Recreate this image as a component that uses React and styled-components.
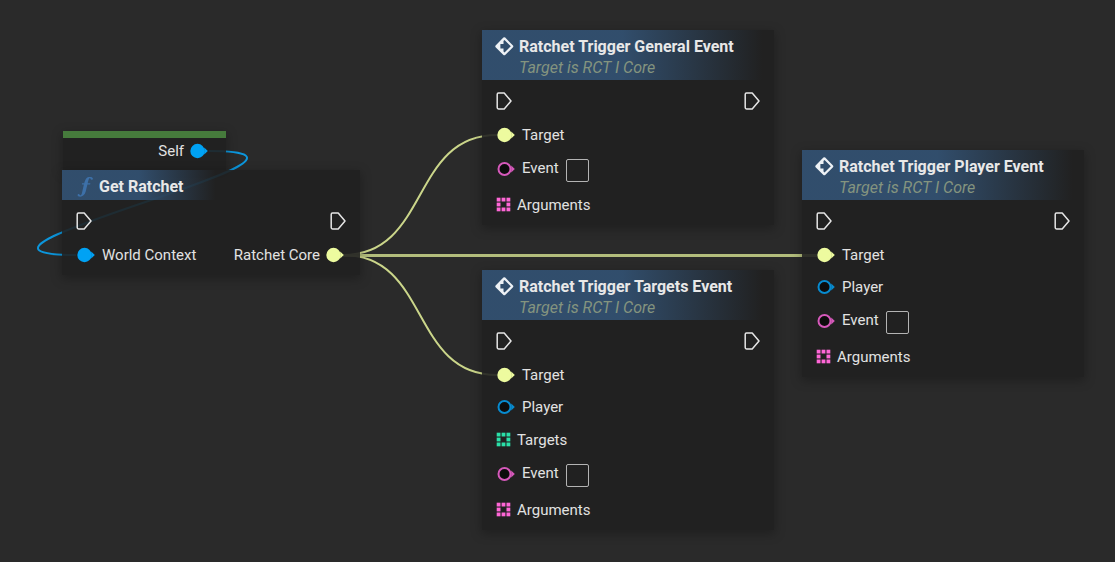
import React from "react";
import styled, { createGlobalStyle } from "styled-components";

const GlobalStyle = createGlobalStyle`
  * { box-sizing: border-box; }
  html, body, #root { height: 100%; }
  body {
    margin: 0;
    background: #2a2a2a;
    color: #e2e2e2;
    font-family: Roboto, "Liberation Sans", sans-serif;
    font-size: 15px;
    line-height: 20px;
  }
`;

const colors = {
  object: "#00a2f4",
  objectOpen: "#078bd0",
  core: "#edfb9f",
  name: "#d659bb",
  args: "#ff66d6",
  targets: "#2ae0a8",
};

const Graph = styled.main`
  position: relative;
  min-height: 100%;
  overflow: hidden;
`;

const Wires = styled.svg`
  position: absolute;
  inset: 0;
  width: 100%;
  height: 100%;
  fill: none;
  stroke-width: 2;
`;

const Node = styled.section`
  position: absolute;
  left: ${(p) => p.$x}px;
  top: ${(p) => p.$y}px;
  width: ${(p) => p.$w}px;
  background: rgba(32, 32, 32, 0.9);
  box-shadow: 0 3px 10px 1px rgba(0, 0, 0, 0.25);
`;

const Header = styled.header`
  display: flex;
  align-items: flex-start;
  gap: 5px;
  height: 50px;
  padding: 7px 14px 0 13px;
  background: linear-gradient(90deg, rgba(50, 80, 112, 0.95) 0%, rgba(50, 80, 112, 0.95) 48%, rgba(50, 80, 112, 0) 96%);
`;

const CompactHeader = styled(Header)`
  gap: 4px;
  height: 30px;
  width: 160px;
  padding: 7px 0 0 15px;
`;

const Title = styled.h2`
  margin: 0;
  font-size: 16px;
  line-height: 20px;
  font-weight: 700;
  color: #e8e8e8;
  white-space: nowrap;
`;

const Subtitle = styled.p`
  margin: 0;
  font-size: 16px;
  line-height: 22px;
  font-style: italic;
  color: #84947f;
  white-space: nowrap;
`;

const Body = styled.div`
  padding: 4px 14px;
`;

const Row = styled.div`
  display: flex;
  align-items: center;
  justify-content: ${(p) => (p.$end ? "flex-end" : "space-between")};
  height: ${(p) => p.$h}px;
`;

const EventRow = styled(Row)`
  justify-content: flex-start;
  gap: 7px;
  margin-bottom: 1px;
`;

const PinLabel = styled.span`
  display: inline-flex;
  align-items: center;
  gap: 5px;
  white-space: nowrap;
`;

const EventLabel = styled.label`
  padding-bottom: 2px;
`;

const ValueBox = styled.input`
  width: 23px;
  height: 23px;
  margin: 2px 0 0;
  padding: 0 2px;
  border: 1px solid #b4b4b4;
  border-radius: 2px;
  background: transparent;
  color: inherit;
  font: inherit;
`;

const GreenBar = styled.div`
  height: 7px;
  background: #467b3c;
`;

const SelfBody = styled.div`
  height: 32px;
  padding: 0 16px 0 14px;
`;

const Exec = () => (
  <svg width="16" height="18" viewBox="0 0 16 18" fill="none" aria-hidden="true">
    <path d="M2.5 1H8.2L15 9L8.2 17H2.5Q1.2 17 1.2 15.6V2.4Q1.2 1 2.5 1Z" stroke="#e6e6e6" strokeWidth="1.5" strokeLinejoin="round" />
  </svg>
);

const Pin = ({ color, open }) => (
  <svg width="21" height="16" viewBox="0 0 21 16" aria-hidden="true">
    <path d="M15.2 4.6L18.8 8L15.2 11.4Z" fill={color} />
    {open ? (
      <circle cx="8.5" cy="8" r="6" fill="#0c0c0c" stroke={color} strokeWidth="2" />
    ) : (
      <circle cx="8.5" cy="8" r="7.2" fill={color} />
    )}
  </svg>
);

const cells = [0.7, 5.6, 10.5];
const ArrayPin = ({ color }) => (
  <svg width="16" height="16" viewBox="0 0 16 16" fill={color} aria-hidden="true">
    {cells.map((y, row) =>
      cells.map((x, col) =>
        row === 1 && col === 1 ? null : <rect key={`${row}-${col}`} x={x} y={y} width="3.8" height="3.8" />
      )
    )}
  </svg>
);

const EventIcon = () => (
  <svg width="19" height="20" viewBox="0 0 19 20" fill="#edf1f5" fillRule="evenodd" aria-hidden="true">
    <path d="M8.4 0.6Q9.3 -0.1 10.2 0.6L18 8.4Q18.7 9.3 18 10.2L10.2 18Q9.3 18.7 8.4 18L0.6 10.2Q-0.1 9.3 0.6 8.4ZM9.5 3L8.5 4V7H5.4V11.6H8.5V14.6L9.5 15.6L15.8 9.3Z" />
  </svg>
);

const FunctionIcon = () => (
  <svg width="18" height="20" viewBox="0 0 18 20" fill="#3d70a8" aria-hidden="true">
    <path d="M15.8 1.2C14.4 -1 10.4 -0.6 8.6 2.4C7.8 3.8 7.5 5 7.2 6.2H5.1L4.9 7.4H6.9L5.3 14.4C4.8 17 4.2 18.3 3.2 18.3C2.7 18.3 2.6 17.1 1.8 17C0.6 16.9 0.2 18.6 1.2 19.2C4 20.6 7.7 18.8 8.7 14.6L10.4 7.4H13.1L13.4 6.2H10.7C11.2 3.9 11.8 1.1 13 1C13.5 1 13.2 2.5 14.4 2.7C15.5 2.8 16.2 2 15.8 1.2Z" />
  </svg>
);

const ExecRow = () => (
  <Row $h={34}>
    <Exec />
    <Exec />
  </Row>
);

const InputPin = ({ color, open, h = 32, children }) => (
  <Row $h={h}>
    <PinLabel>
      <Pin color={color} open={open} />
      {children}
    </PinLabel>
  </Row>
);

const ArrayInput = ({ color, children }) => (
  <Row $h={33}>
    <PinLabel>
      <ArrayPin color={color} />
      {children}
    </PinLabel>
  </Row>
);

const EventInput = ({ id }) => (
  <EventRow $h={36}>
    <PinLabel>
      <Pin color={colors.name} open />
      <EventLabel htmlFor={id}>Event</EventLabel>
    </PinLabel>
    <ValueBox id={id} type="text" />
  </EventRow>
);

const TriggerNode = ({ x, y, w, title, children }) => (
  <Node $x={x} $y={y} $w={w}>
    <Header>
      <EventIcon />
      <div>
        <Title>{title}</Title>
        <Subtitle>Target is RCT I Core</Subtitle>
      </div>
    </Header>
    <Body>
      <ExecRow />
      <InputPin color={colors.core} h={33}>Target</InputPin>
      {children}
    </Body>
  </Node>
);

export default function App() {
  return (
    <>
      <GlobalStyle />
      <Graph>
        <Wires aria-hidden="true">
          <path d="M209 151C381 151 -96 255 76 255" stroke="#0c96dc" />
          <g stroke="#cbd68a">
            <path d="M343 255C430 255 410 135 497 135" />
            <path d="M343 255.500H817" stroke="#b3bd7c" strokeWidth="3" />
            <path d="M343 255C430 255 410 375 497 375" />
          </g>
        </Wires>

        <Node $x={63} $y={131} $w={163}>
          <GreenBar />
          <SelfBody>
            <Row $h={26} $end>
              <PinLabel>
                Self
                <Pin color={colors.object} />
              </PinLabel>
            </Row>
          </SelfBody>
        </Node>

        <Node $x={62} $y={170} $w={298}>
          <CompactHeader>
            <FunctionIcon />
            <Title>Get Ratchet</Title>
          </CompactHeader>
          <Body>
            <ExecRow />
            <Row $h={33}>
              <PinLabel>
                <Pin color={colors.object} />
                World Context
              </PinLabel>
              <PinLabel>
                Ratchet Core
                <Pin color={colors.core} />
              </PinLabel>
            </Row>
          </Body>
        </Node>

        <TriggerNode x={482} y={30} w={292} title="Ratchet Trigger General Event">
          <EventInput id="general-event" />
          <ArrayInput color={colors.args}>Arguments</ArrayInput>
        </TriggerNode>

        <TriggerNode x={482} y={270} w={292} title="Ratchet Trigger Targets Event">
          <InputPin color={colors.objectOpen} open>Player</InputPin>
          <ArrayInput color={colors.targets}>Targets</ArrayInput>
          <EventInput id="targets-event" />
          <ArrayInput color={colors.args}>Arguments</ArrayInput>
        </TriggerNode>

        <TriggerNode x={802} y={150} w={282} title="Ratchet Trigger Player Event">
          <InputPin color={colors.objectOpen} open>Player</InputPin>
          <EventInput id="player-event" />
          <ArrayInput color={colors.args}>Arguments</ArrayInput>
        </TriggerNode>
      </Graph>
    </>
  );
}
